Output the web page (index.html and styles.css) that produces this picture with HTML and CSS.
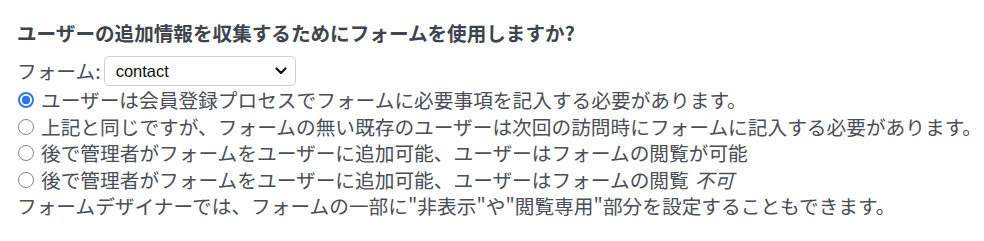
FILE: index.html
```html
<!DOCTYPE html>
<html lang="ja">
<head>
<meta charset="utf-8">
<link rel="stylesheet" href="styles.css">
</head>
<body>
<div class="wrap">
  <h3 class="title">ユーザーの追加情報を収集するためにフォームを使用しますか?</h3>
  <div class="form-row">
    <label class="form-label" for="form-select">フォーム:</label>
    <span class="select-wrap">
      <select id="form-select" class="select">
        <option>contact</option>
      </select>
      <svg class="chev" width="12" height="8" viewBox="0 0 12 8"><path d="M1.5 1.5 L6 6 L10.5 1.5" fill="none" stroke="#111" stroke-width="2.2" stroke-linecap="round" stroke-linejoin="round"/></svg>
    </span>
  </div>
  <label class="opt"><input type="radio" name="m" class="radio" checked>ユーザーは会員登録プロセスでフォームに必要事項を記入する必要があります。</label>
  <label class="opt"><input type="radio" name="m" class="radio">上記と同じですが、フォームの無い既存のユーザーは次回の訪問時にフォームに記入する必要があります。</label>
  <label class="opt"><input type="radio" name="m" class="radio">後で管理者がフォームをユーザーに追加可能、ユーザーはフォームの閲覧が可能</label>
  <label class="opt"><input type="radio" name="m" class="radio">後で管理者がフォームをユーザーに追加可能、ユーザーはフォームの閲覧 <i>不可</i></label>
  <p class="note">フォームデザイナーでは、フォームの一部に"非表示"や"閲覧専用"部分を設定することもできます。</p>
</div>
</body>
</html>
```
FILE: styles.css
```css
html, body {
  margin: 0;
  background: #ffffff;
}
.wrap {
  padding: 20px 17px 0 17px;
  font-family: "Noto Sans CJK JP", "Noto Sans", sans-serif;
  font-size: 19.7px;
  color: #4a4e56;
}
.title {
  margin: 0;
  font-size: 19.6px;
  line-height: 26px;
  font-weight: 700;
  color: #40444c;
}
.form-row {
  display: flex;
  align-items: center;
  margin-top: 10px;
  height: 30px;
}
.form-label {
  margin-right: 3px;
  line-height: 26px;
}
.select-wrap {
  position: relative;
  display: inline-block;
}
.select {
  appearance: none;
  -webkit-appearance: none;
  width: 192px;
  height: 30px;
  border: 1px solid #cfcfcf;
  border-radius: 5px;
  background: #ffffff;
  font-family: "Liberation Sans", Arial, sans-serif;
  font-size: 16.5px;
  color: #111;
  padding: 0 0 0 11px;
  margin: 0;
  display: block;
}
.chev {
  position: absolute;
  right: 9px;
  top: 11px;
  pointer-events: none;
}
.opt {
  display: flex;
  align-items: center;
  line-height: 26.5px;
  white-space: nowrap;
}
.opt:first-of-type {
  margin-top: 1px;
}
.radio {
  appearance: none;
  -webkit-appearance: none;
  box-sizing: border-box;
  width: 16px;
  height: 16px;
  margin: 0 7px 0 1px;
  border: 1.4px solid #858585;
  border-radius: 50%;
  background: #ffffff;
  flex: none;
}
.radio:checked {
  border: 2px solid #2f74e8;
  background: radial-gradient(circle, #2f74e8 0 4px, #ffffff 4.6px);
}
.opt i {
  margin-left: 0.3em;
}
.note {
  margin: 0;
  line-height: 26.5px;
}
```
